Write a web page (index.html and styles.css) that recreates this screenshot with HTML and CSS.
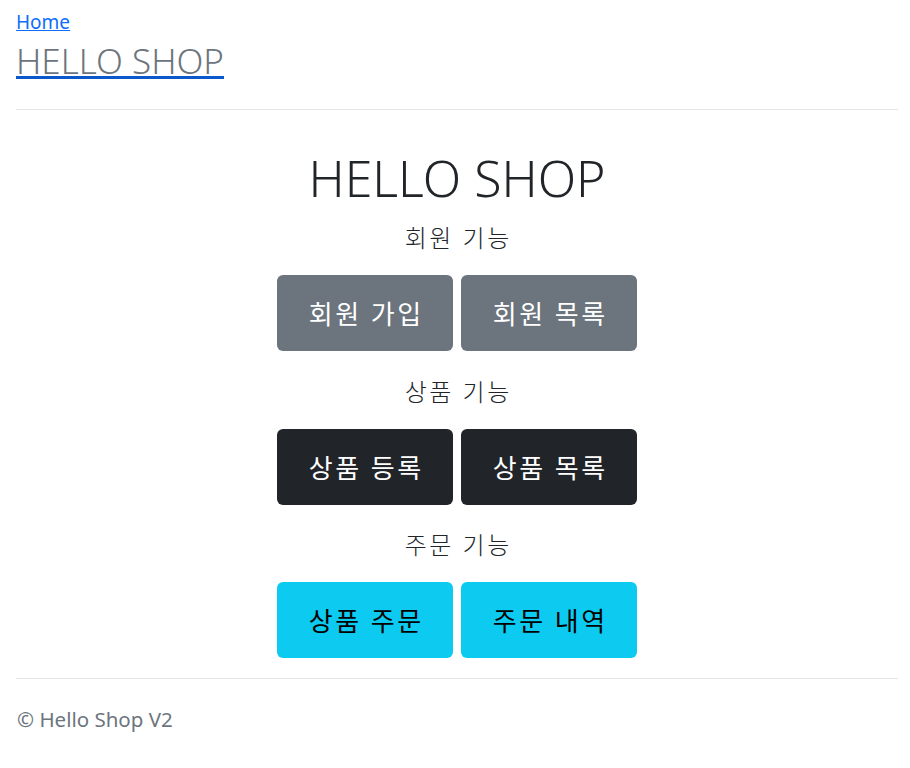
FILE: index.html
```html
<!DOCTYPE html>
<html lang="ko">
<head>
<meta charset="utf-8">
<title>HELLO SHOP</title>
<link rel="stylesheet" href="styles.css">
</head>
<body>
<div class="container">
  <header class="header">
    <a class="home" href="#">Home</a>
    <a class="brand" href="#"><span class="muted">HELLO SHOP</span></a>
  </header>
  <main class="main">
    <h1 class="title">HELLO SHOP</h1>
    <section class="group">
      <p class="label">회원 기능</p>
      <div class="btns">
        <a class="btn btn-secondary" href="#">회원 가입</a>
        <a class="btn btn-secondary" href="#">회원 목록</a>
      </div>
    </section>
    <section class="group">
      <p class="label">상품 기능</p>
      <div class="btns">
        <a class="btn btn-dark" href="#">상품 등록</a>
        <a class="btn btn-dark" href="#">상품 목록</a>
      </div>
    </section>
    <section class="group">
      <p class="label">주문 기능</p>
      <div class="btns">
        <a class="btn btn-info" href="#">상품 주문</a>
        <a class="btn btn-info" href="#">주문 내역</a>
      </div>
    </section>
  </main>
  <footer class="footer">
    <p>© Hello Shop V2</p>
  </footer>
</div>
</body>
</html>
```
FILE: styles.css
```css
* { box-sizing: border-box; }
html, body { margin: 0; padding: 0; background: #fff; }
body {
  font-family: "Noto Sans", "Noto Sans CJK KR", sans-serif;
  color: #212529;
}
.container { padding: 9px 12px 0 16px; }
.header {
  display: flex;
  flex-direction: column;
  align-items: flex-start;
  border-bottom: 1px solid #e5e5e5;
  padding-bottom: 23px;
}
.home {
  color: #0d6efd;
  font-size: 19px;
  line-height: 26px;
}
.brand {
  color: #0a58ca;
  font-size: 35px;
  font-weight: 300;
  line-height: 51px;
}
.muted { color: #6c757d; }
.main {
  display: flex;
  flex-direction: column;
  align-items: center;
  padding-top: 25px;
  padding-bottom: 20px;
  border-bottom: 1px solid #e5e5e5;
}
.title {
  margin: 0;
  font-size: 50px;
  font-weight: 300;
  line-height: 87px;
}
.group { display: flex; flex-direction: column; align-items: center; }
.label {
  margin: 0;
  font-size: 24px;
  line-height: 32px;
  font-weight: 300;
  letter-spacing: 2.5px;
  padding-left: 2.5px;
}
.group + .group .label { margin-top: 24.5px; }
.btns { display: flex; gap: 8px; margin-top: 21px; }
.btn {
  display: flex;
  align-items: center;
  justify-content: center;
  width: 176px;
  height: 76px;
  border-radius: 6px;
  font-size: 26px;
  letter-spacing: 2.5px;
  padding-left: 2.5px;
  text-decoration: none;
  color: #fff;
}
.btn-secondary { background: #6c757d; }
.btn-dark { background: #212529; }
.btn-info { background: #0dcaf0; color: #000; }
.footer { padding-top: 27px; }
.footer p {
  margin: 0;
  padding-left: 1px;
  color: #6c757d;
  font-size: 20.5px;
  line-height: 26px;
}
```
